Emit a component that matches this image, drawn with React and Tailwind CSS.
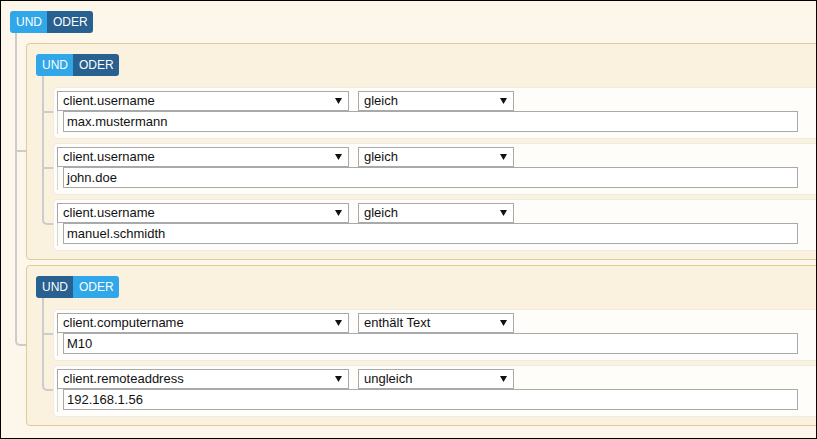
import React from "react";

const BLUE = "bg-[#2fa7e8]";
const DARK = "bg-[#28608f]";

const Toggle = ({ und }) => (
  <div className="flex h-[22px] w-fit overflow-hidden rounded-[3px] text-[12px] leading-[22px] text-white">
    <span className={`pl-[6px] pr-[5px] ${und ? BLUE : DARK}`}>UND</span>
    <span className={`pl-[6px] pr-[5px] ${und ? DARK : BLUE}`}>ODER</span>
  </div>
);

const Arrow = () => (
  <svg width="7" height="6" viewBox="0 0 7 6" className="shrink-0">
    <path d="M0 0h7L3.5 6z" fill="#111" />
  </svg>
);

const Select = ({ value, w }) => (
  <div
    className={`flex h-[20px] items-center justify-between border border-[#a9a9a9] bg-white pl-[5px] pr-[6px] ${w}`}
  >
    <span>{value}</span>
    <Arrow />
  </div>
);

const Rule = ({ field, op, value }) => (
  <div className="h-[52px] rounded-[4px] border border-[#eeebe5] bg-[#fffdfa] pl-[3px] pt-[3px]">
    <div className="flex gap-[9px]">
      <Select value={field} w="w-[292px]" />
      <Select value={op} w="w-[156px]" />
    </div>
    <div className="w-fit border-l border-[#d4d4d4] pb-[2px] pl-[5px]">
      <div className="flex h-[21px] w-[735px] items-center border border-[#a9a9a9] bg-white pl-[3px]">
        {value}
      </div>
    </div>
  </div>
);

// connector line classes, written out per level
const LINES = {
  outer: {
    first: "top-[-10px] h-[calc(50%+10px)]",
    rest: "top-[-5px] h-[calc(50%+5px)]",
    throughFirst: "top-[-10px]",
    throughRest: "top-[-5px]",
  },
  inner: {
    first: "top-[-11px] h-[calc(50%+11px)]",
    rest: "top-[-4px] h-[calc(50%+4px)]",
    throughFirst: "top-[-11px]",
    throughRest: "top-[-4px]",
  },
};

const Branch = ({ level, index, last, children }) => {
  const l = LINES[level];
  return (
    <div className="relative">
      {!last && (
        <span
          className={`absolute bottom-0 left-[-11px] w-[2px] bg-[#cccccc] ${
            index === 0 ? l.throughFirst : l.throughRest
          }`}
        />
      )}
      <span
        className={`absolute left-[-11px] w-[11px] border-b-2 border-l-2 border-[#cccccc] ${
          index === 0 ? l.first : l.rest
        } ${last ? "rounded-bl-[5px]" : ""}`}
      />
      {children}
    </div>
  );
};

const Group = ({ und, rules }) => (
  <div className="w-[800px] rounded-[4px] border border-[#dfca9a] bg-[#faf1de] pb-[8px] pl-[9px] pt-[10px]">
    <Toggle und={und} />
    <div className="mt-[11px] flex flex-col gap-[4px] pl-[17px]">
      {rules.map((r, i) => (
        <Branch key={i} level="inner" index={i} last={i === rules.length - 1}>
          <Rule {...r} />
        </Branch>
      ))}
    </div>
  </div>
);

const groups = [
  {
    und: true,
    rules: [
      { field: "client.username", op: "gleich", value: "max.mustermann" },
      { field: "client.username", op: "gleich", value: "john.doe" },
      { field: "client.username", op: "gleich", value: "manuel.schmidth" },
    ],
  },
  {
    und: false,
    rules: [
      { field: "client.computername", op: "enthält Text", value: "M10" },
      { field: "client.remoteaddress", op: "ungleich", value: "192.168.1.56" },
    ],
  },
];

export default function App() {
  return (
    <div className="h-[439px] w-[817px] overflow-hidden border border-black bg-[#fdf6ea] pl-[9px] pt-[10px] font-['Liberation_Sans',Arial,sans-serif] text-[13px] text-[#111]">
      <Toggle und />
      <div className="mt-[10px] flex flex-col gap-[5px] pl-[16px]">
        {groups.map((g, i) => (
          <Branch key={i} level="outer" index={i} last={i === groups.length - 1}>
            <Group {...g} />
          </Branch>
        ))}
      </div>
    </div>
  );
}
